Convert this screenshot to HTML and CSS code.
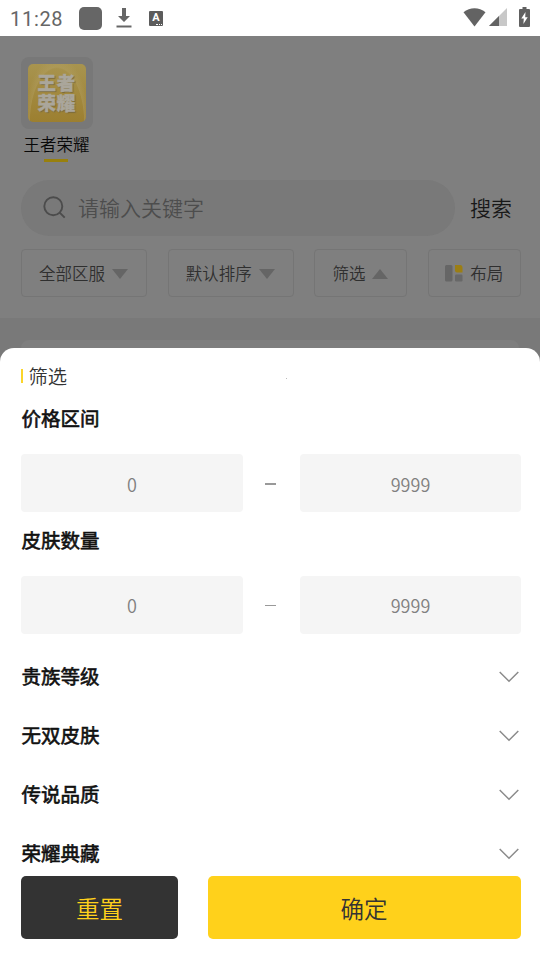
FILE: index.html
```html
<!DOCTYPE html>
<html lang="zh-CN">
<head>
<meta charset="utf-8">
<title>筛选</title>
<link rel="stylesheet" href="styles.css">
</head>
<body>
<div class="statusbar">
  <span class="clock">11:28</span>
  <span class="app-square"></span>
  <svg class="download" width="16" height="22" viewBox="0 0 16 22"><path d="M6 1h4v8h4l-6 6-6-6h4z" fill="#666"/><path d="M0.5 18.5h15v2h-15z" fill="#666"/></svg>
  <span class="a-badge">A<i></i></span>
  <span class="status-right">
    <svg width="23" height="19" viewBox="0 0 23 19"><path d="M11.5 18.5L.5 4.2Q5.500.3 11.5.3t11 3.900z" fill="#636363"/></svg>
    <svg width="18" height="18" viewBox="0 0 18 18"><path d="M18 0v18H0z" fill="#c8c8c8"/><path d="M10 8v10H0z" fill="#636363"/></svg>
    <svg class="battery" width="11" height="20" viewBox="0 0 11 20"><path d="M3.500 0h4v2H10q1 0 1 1v16q0 1-1 1H1q-1 0-1-1V3q0-1 1-1h2.500z" fill="#606060"/><path d="M6.500 5L2.300 11.500h2.500L4.400 17l4.300-6.700H6.200z" fill="#fff"/></svg>
  </span>
</div>
<main class="page">
  <div class="game">
    <div class="game-icon"><div class="game-art"><span>王者荣耀</span></div></div>
    <span class="game-name">王者荣耀</span>
    <span class="underline"></span>
  </div>
  <div class="search-row">
    <div class="search">
      <svg width="23" height="23" viewBox="0 0 23 23" fill="none" stroke="#4c4c4c" stroke-width="1.900"><circle cx="10.300" cy="10.300" r="9"/><path d="M16.700 16.700l5 5"/></svg>
      <span>请输入关键字</span>
    </div>
    <span class="search-btn">搜索</span>
  </div>
  <div class="filters">
    <div class="chip wide">全部区服<i class="tri"></i></div>
    <div class="chip wide second">默认排序<i class="tri"></i></div>
    <div class="chip narrow">筛选<i class="tri up"></i></div>
    <div class="chip layout"><svg width="18" height="17" viewBox="0 0 18 17"><rect width="7.500" height="16.500" rx="1.500" fill="#666"/><path d="M10 0h5q2.500 0 2.500 3v4.500h-5.500q-2 0-2-2z" fill="#9b7e14"/><rect x="10" y="9.500" width="7.500" height="7" rx="1.200" fill="#686868"/></svg>布局</div>
  </div>
  <div class="list"><div class="card"></div></div>
</main>
<section class="sheet">
  <div class="sheet-title"><i class="bar"></i>筛选<span class="dot"></span></div>
  <h2 class="price">价格区间</h2>
  <div class="range first"><div class="field">0</div><i class="dash thick"></i><div class="field">9999</div></div>
  <h2 class="skins">皮肤数量</h2>
  <div class="range"><div class="field">0</div><i class="dash"></i><div class="field">9999</div></div>
  <div class="groups">
    <div class="group"><h2>贵族等级</h2><svg class="chev" width="20" height="12" viewBox="0 0 20 12"><path d="M.7 1l9.300 9.300L19.300 1"/></svg></div>
    <div class="group"><h2>无双皮肤</h2><svg class="chev" width="20" height="12" viewBox="0 0 20 12"><path d="M.7 1l9.300 9.300L19.300 1"/></svg></div>
    <div class="group"><h2>传说品质</h2><svg class="chev" width="20" height="12" viewBox="0 0 20 12"><path d="M.7 1l9.300 9.300L19.300 1"/></svg></div>
    <div class="group last"><h2>荣耀典藏</h2><svg class="chev" width="20" height="12" viewBox="0 0 20 12"><path d="M.7 1l9.300 9.300L19.300 1"/></svg></div>
  </div>
  <div class="actions"><div class="btn reset">重置</div><div class="btn ok">确定</div></div>
</section>
</body>
</html>
```
FILE: styles.css
```css
* { box-sizing: border-box; }
body {
  margin: 0;
  width: 540px;
  height: 960px;
  overflow: hidden;
  position: relative;
  background: #fff;
  font-family: "Noto Sans CJK SC", sans-serif;
  font-weight: 350;
  color: #333;
}
i { font-style: normal; }
svg { display: block; flex: none; }

.statusbar { height: 36px; display: flex; align-items: center; padding: 0 10px; }
.clock { width: 69px; font: 400 20px/36px Roboto, sans-serif; letter-spacing: .7px; color: #666; padding-top: 1px; }
.app-square { width: 23px; height: 23px; border-radius: 5px; background: #666; margin-top: 1px; }
.download { margin: 0 0 0 14px; }
.a-badge {
  width: 14px; height: 15px; margin: 1px 0 0 17px; border-radius: 1px; background: #5c5c5c; color: #fff;
  font: bold 11px/13px Roboto, sans-serif; text-align: center; position: relative;
}
.a-badge i { position: absolute; right: 1px; bottom: 1px; width: 6px; border-bottom: 1px dotted #fff; }
.status-right { display: flex; align-items: center; margin-left: auto; height: 34px; align-self: flex-start; gap: 3px; }
.battery { margin-left: 9px; }

.page { height: 924px; background: #7f7f7f; padding-top: 21px; }
.game { width: 72px; margin-left: 21px; display: flex; flex-direction: column; align-items: center; }
.game-icon { width: 72px; height: 72px; border-radius: 8px; background: #787878; padding: 7px; }
.game-art {
  height: 58px; border-radius: 5px; color: #aaa69b;
  background: radial-gradient(ellipse at 50% 100%, transparent 65%, #b5a26760 67%, transparent 80%), linear-gradient(#a8944f, #9c7f30);
  display: flex; justify-content: center; padding-top: 8px;
}
.game-art span { width: 39px; height: 42px; font-size: 18.500px; line-height: 20px; letter-spacing: .7px; word-break: break-all; font-weight: 900; -webkit-text-stroke: .4px #aaa69b; text-shadow: 1px 1px 1px #77683d; }
.game-name { font-size: 16.500px; line-height: 22px; margin: 4px 1px 0 0; white-space: nowrap; color: #080808; }
.underline { width: 24px; height: 3px; margin: 4px 2px 0 0; background: #98800d; }

.search-row { display: flex; align-items: center; padding-left: 21px; margin-top: 18px; height: 56px; }
.search { width: 434px; height: 56px; border-radius: 28px; background: #797979; display: flex; align-items: center; padding: 0 0 2px 22px; gap: 12px; font-size: 21px; color: #4d4d4d; }
.search-btn { margin: -2px 0 0 15px; font-size: 21px; color: #181818; }

.filters { display: flex; margin: 13px 19px 0 21px; height: 48px; font-size: 16.500px; color: #2f2f2f; }
.chip { border: 1px solid #757575; border-radius: 4px; display: flex; align-items: center; padding-left: 17px; }
.wide { width: 126px; }
.second { width: 127px; margin-left: 21px; }
.narrow { width: 93px; margin-left: 20px; }
.layout { width: 93px; margin-left: 21px; padding-left: 16px; gap: 7px; }
.tri { margin: 2px 0 0 7px; border: 8px solid transparent; border-top: 10px solid #656565; border-bottom: 0; }
.tri.up { border-top: 0; border-bottom: 10px solid #656565; }
.list { margin-top: 21px; height: 642px; padding: 22px 21px 0; background: #797979; }
.card { height: 50px; background: #7e7e7e; border-radius: 8px; }

.sheet { position: absolute; left: 0; top: 348px; width: 540px; height: 612px; background: #fff; border-radius: 14px 14px 0 0; padding: 14px 19px 0 21px; }
h2 { margin: 0; padding-left: .5px; font-size: 19.500px; line-height: 28px; font-weight: 400; -webkit-text-stroke: .6px #111; color: #111; }
.sheet-title { height: 28px; display: flex; align-items: center; font-size: 19.300px; line-height: 28px; color: #333; }
.bar { width: 2px; height: 14px; margin-right: 5.500px; background: #fbd52a; }
.dot { width: 1px; height: 1px; margin: 5px 0 0 219px; background: #bbb; }
.price { margin-top: 14px; }
.range { display: flex; align-items: center; margin-top: 22px; height: 58px; }
.field { width: 222px; height: 58px; border-radius: 4px; background: #f5f5f5; color: #808080; font-size: 18px; line-height: 58px; text-align: center; }
.first .field { line-height: 60px; }
.dash { width: 11px; height: 1px; background: #999; margin: 0 24px 0 22px; }
.field:last-child { width: 221px; }
.thick { height: 2px; margin-top: 1px; }
.skins { margin-top: 14px; }
.groups { margin-top: 28px; }
.group { display: flex; justify-content: space-between; align-items: center; height: 28px; margin-bottom: 31px; }
.last { margin-bottom: 9px; }
.chev { margin: 2px 2px 0 0; fill: none; stroke: #8b8b8b; stroke-width: 1.500; }
.actions { display: flex; gap: 30px; }
.btn { height: 63px; border-radius: 5px; font-size: 23.500px; line-height: 65px; text-align: center; }
.reset { width: 157px; background: #333; color: #ffd11c; }
.ok { width: 313px; background: #ffd11b; color: #333; padding-right: 1px; }
```
